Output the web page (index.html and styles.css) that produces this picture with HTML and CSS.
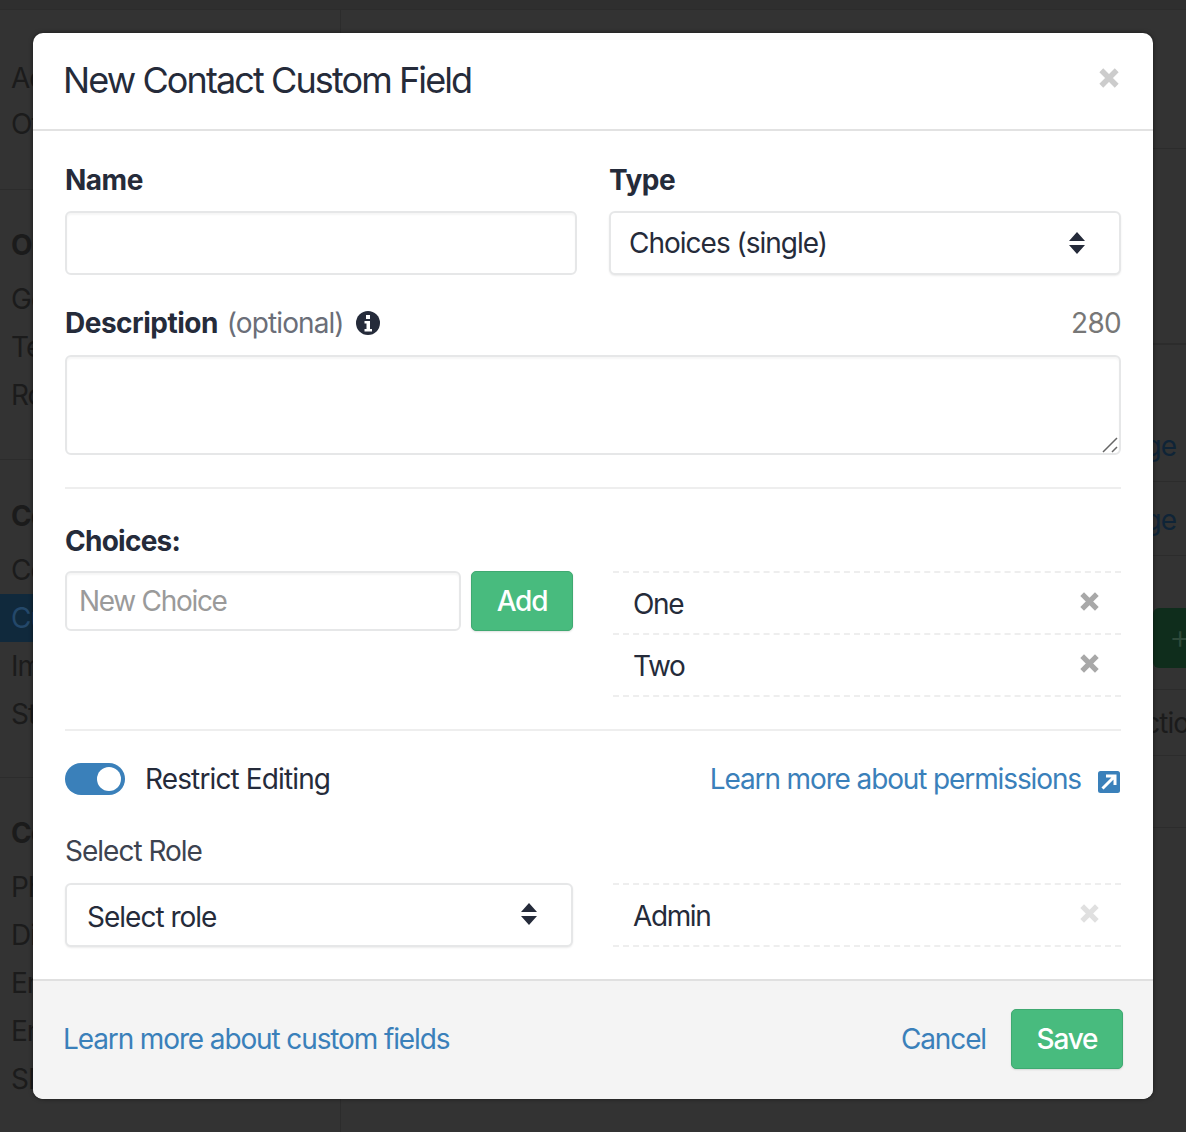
FILE: index.html
```html
<!DOCTYPE html>
<html lang="en">
<head>
    <meta charset="UTF-8">
    <title>New Contact Custom Field</title>
    <link rel="stylesheet" href="styles.css">
</head>
<body>
    <!-- Settings page behind the dialog -->
    <div class="page">
        <div class="topbar"></div>
        <div class="page-body">
            <aside class="sidebar">
                <section class="side-group side-group-first">
                    <a>Add-ons</a>
                    <a>Other</a>
                </section>
                <section class="side-group">
                    <h4>Organization</h4>
                    <a>General</a>
                    <a>Teams</a>
                    <a>Roles</a>
                </section>
                <section class="side-group side-group-contacts">
                    <h4>Contacts</h4>
                    <a>Contacts</a>
                    <a class="active">Custom Fields</a>
                    <a>Import</a>
                    <a>Statuses</a>
                </section>
                <section class="side-group">
                    <h4>Communication</h4>
                    <a>Phone</a>
                    <a>Dialer</a>
                    <a>Email</a>
                    <a>Email Templates</a>
                    <a>SMS</a>
                </section>
            </aside>
            <main class="content">
                <div class="content-row row-a"></div>
                <div class="content-row row-b"></div>
                <div class="content-row row-c"><a>Manage</a></div>
                <div class="content-row row-d"><a>Manage</a></div>
                <div class="content-row row-e"><span class="page-add">+</span></div>
                <div class="content-row row-f"><span>Actions</span></div>
                <div class="content-row row-g"></div>
            </main>
        </div>
    </div>

    <div class="modal">
        <header class="modal-header">
            <h2>New Contact Custom Field</h2>
            <svg class="icon-x close" viewBox="0 0 20 20"><path d="M3 3l14 14M17 3L3 17"/></svg>
        </header>

        <form class="modal-body">
            <div class="two-col">
                <div class="field">
                    <label class="strong">Name</label>
                    <input type="text" class="input input-tall">
                </div>
                <div class="field">
                    <label class="strong">Type</label>
                    <div class="select-wrap">
                        <select class="select">
                            <option>Choices (single)</option>
                        </select>
                        <svg class="updown" viewBox="0 0 16 24"><path d="M8 1l8 9H0zM0 14h16l-8 9z"/></svg>
                    </div>
                </div>
            </div>

            <div class="desc-head">
                <label class="strong">Description</label>
                <span class="optional">(optional)</span>
                <svg class="info" viewBox="0 0 24 24">
                    <circle cx="12" cy="12" r="12"/>
                    <path class="info-mark" d="M10 4h4v4h-4zM8.500 10h5.500v8h2v2.500H8.500V18h2v-5.500h-2z"/>
                </svg>
                <span class="count">280</span>
            </div>
            <div class="textarea-wrap">
                <textarea class="input textarea"></textarea>
                <svg class="grip" viewBox="0 0 16 16"><path d="M1 15L15 1M10 15l5-5"/></svg>
            </div>

            <hr>

            <label class="strong choices-label">Choices:</label>
            <div class="choices-row">
                <div class="add-choice">
                    <input type="text" class="input" placeholder="New Choice">
                    <button type="button" class="btn btn-add">Add</button>
                </div>
                <ul class="tag-list">
                    <li>One <svg class="icon-x remove" viewBox="0 0 20 20"><path d="M3 3l14 14M17 3L3 17"/></svg></li>
                    <li>Two <svg class="icon-x remove" viewBox="0 0 20 20"><path d="M3 3l14 14M17 3L3 17"/></svg></li>
                </ul>
            </div>

            <hr class="hr-second">

            <div class="restrict-row">
                <span class="toggle"><span class="knob"></span></span>
                <span class="restrict-text">Restrict Editing</span>
                <a class="link learn-perm">Learn more about permissions</a>
                <svg class="ext" viewBox="0 0 22 22">
                    <rect width="22" height="22" rx="2.500"/>
                    <path class="ext-arrow" d="M4.500 17.500L16.500 5.500M8 5h9v9"/>
                </svg>
            </div>

            <div class="choices-row role-row">
                <div class="role-col">
                    <label class="role-label">Select Role</label>
                    <div class="select-wrap">
                        <select class="select select-role">
                            <option>Select role</option>
                        </select>
                        <svg class="updown updown-role" viewBox="0 0 16 24"><path d="M8 1l8 9H0zM0 14h16l-8 9z"/></svg>
                    </div>
                </div>
                <ul class="tag-list role-list">
                    <li>Admin <svg class="icon-x remove muted" viewBox="0 0 20 20"><path d="M3 3l14 14M17 3L3 17"/></svg></li>
                </ul>
            </div>
        </form>

        <footer class="modal-footer">
            <a class="link">Learn more about custom fields</a>
            <a class="link cancel">Cancel</a>
            <button type="button" class="btn btn-save">Save</button>
        </footer>
    </div>
</body>
</html>
```

FILE: styles.css
```css
/* General Page Styling */
* {
    box-sizing: border-box;
}

html, body {
    height: 100%;
}

body {
    margin: 0;
    overflow: hidden;
    background: #333333;
    color: #252b3a;
    font-family: 'Inter', 'Liberation Sans', sans-serif;
    font-size: 28px;
    letter-spacing: -1px;
}

/* Dimmed page behind the dialog */
.page {
    height: 100%;
    color: #1b1b1b;
}

.topbar {
    height: 10px;
    border-bottom: 1px solid #2c2c2c;
    background: #2f2f2f;
}

.page-body {
    display: flex;
    height: 1122px;
}

.sidebar {
    width: 341px;
    flex: none;
    border-right: 1px solid #2c2c2c;
}

.side-group {
    padding: 31px 0 40px;
    border-bottom: 1px solid #2c2c2c;
}

.side-group:last-child {
    border-bottom: none;
}

.side-group h4 {
    margin: 0 0 6px;
    padding-left: 11px;
    font-size: 28px;
    line-height: 48px;
    font-weight: 700;
}

.side-group a {
    display: block;
    height: 48px;
    padding-left: 11px;
    line-height: 48px;
    white-space: nowrap;
}

.side-group-first {
    padding: 45px 0 42px;
}

.side-group-first a {
    height: 46px;
    line-height: 46px;
}

.side-group-contacts {
    padding: 32px 0 39px;
}

.side-group a.active {
    background: #10293c;
    color: #24486a;
}

.content {
    flex: 1;
    min-width: 0;
    overflow: hidden;
}

.content-row {
    display: flex;
    justify-content: flex-end;
    align-items: center;
    border-bottom: 1px solid #2c2c2c;
    white-space: nowrap;
}

.content-row a {
    padding-right: 10px;
    color: #0f2437;
}

.row-a { height: 139px; }
.row-b { height: 195px; }
.row-c { height: 138px; align-items: flex-end; padding-bottom: 18px; border-top: 1px solid #2c2c2c; }
.row-d { height: 74px; align-items: flex-end; padding-bottom: 18px; }
.row-e { height: 134px; padding-top: 30px; }
.row-f { height: 66px; justify-content: flex-start; padding-left: 785px; }
.row-g { height: 72px; }

.page-add {
    display: block;
    width: 60px;
    height: 60px;
    margin-right: -27px;
    padding-left: 16px;
    border-radius: 6px;
    background: #0f2d1c;
    color: #2f4a3a;
    font-weight: 300;
    font-size: 34px;
    line-height: 58px;
}

/* Dialog */
.modal {
    position: absolute;
    top: 33px;
    left: 33px;
    width: 1120px;
    height: 1066px;
    display: flex;
    flex-direction: column;
    border-radius: 10px;
    background: #ffffff;
    box-shadow: 0 0 4px rgba(0, 0, 0, 0.5);
    overflow: hidden;
}

.modal-header {
    height: 98px;
    flex: none;
    display: flex;
    justify-content: space-between;
    align-items: center;
    padding: 0 34px 0 30px;
    border-bottom: 2px solid #e2e2e2;
}

.modal-header h2 {
    margin: 0 0 2px;
    font-size: 36px;
    font-weight: 400;
    letter-spacing: -1.9px;
}

.icon-x path {
    fill: none;
    stroke: currentColor;
    stroke-width: 5;
}

.close {
    width: 22px;
    height: 22px;
    margin: 0 -1px 6px 0;
    color: #cccccc;
}

.modal-body {
    flex: 1;
    padding: 32px 32px 0;
}

.two-col {
    display: flex;
    gap: 32px;
}

.field {
    flex: 1;
}

.strong {
    display: block;
    font-weight: 700;
    line-height: 34px;
    letter-spacing: -0.5px;
}

.field .strong {
    margin-bottom: 14px;
}

/* Inputs */
.input {
    display: block;
    width: 100%;
    height: 60px;
    padding: 0 12px;
    border: 2px solid #e6e7e8;
    border-radius: 6px;
    outline: none;
    background: #ffffff;
    box-shadow: inset 0 2px 2px rgba(0, 0, 0, 0.04);
    color: inherit;
    font: inherit;
    letter-spacing: inherit;
}

.input::placeholder {
    color: #9a9a9a;
    letter-spacing: -1.3px;
}

.input-tall {
    height: 64px;
}

.select-wrap {
    position: relative;
}

.select {
    display: block;
    width: 100%;
    height: 64px;
    padding: 0 18px;
    border: 2px solid #e6e7e8;
    border-radius: 6px;
    outline: none;
    background: #ffffff;
    box-shadow: 0 1px 2px rgba(0, 0, 0, 0.08);
    appearance: none;
    color: inherit;
    font: inherit;
    letter-spacing: inherit;
}

.updown {
    position: absolute;
    top: 20px;
    right: 36px;
    width: 16px;
    height: 24px;
    fill: #252b3a;
    pointer-events: none;
}

.desc-head {
    display: flex;
    align-items: center;
    margin-top: 30px;
    height: 36px;
}

.optional {
    margin-left: 9px;
    color: #6b6e78;
    letter-spacing: -0.9px;
}

.info {
    width: 24px;
    height: 24px;
    margin-left: 12px;
    fill: #252b3a;
}

.info-mark {
    fill: #ffffff;
}

.count {
    margin-left: auto;
    color: #777777;
    letter-spacing: -0.7px;
}

.textarea-wrap {
    position: relative;
    margin-top: 14px;
}

.textarea {
    height: 100px;
    padding: 10px 13px;
    resize: none;
}

.grip {
    position: absolute;
    right: 3px;
    bottom: 2px;
    width: 16px;
    height: 16px;
    pointer-events: none;
}

.grip path {
    fill: none;
    stroke: #666666;
    stroke-width: 1.500;
}

hr {
    height: 2px;
    margin: 32px 0 0;
    border: none;
    background: #eeeeee;
}

.choices-label {
    margin-top: 35px;
    letter-spacing: -0.75px;
}

/* Choices */
.choices-row {
    display: flex;
    justify-content: space-between;
    margin-top: 13px;
}

.add-choice {
    display: flex;
    gap: 10px;
    width: 508px;
}

.btn {
    flex: none;
    height: 60px;
    border: 1px solid #3fa971;
    border-radius: 5px;
    background: #48bb7e;
    box-shadow: 0 1px 2px rgba(0, 0, 0, 0.12);
    color: #ffffff;
    font: inherit;
    font-weight: 500;
    letter-spacing: -1.2px;
}

.btn-add {
    width: 102px;
}

.tag-list {
    width: 508px;
    height: 126px;
    margin: 0;
    padding: 0;
    list-style: none;
    border-top: 2px dashed #eeeeee;
    letter-spacing: -1.4px;
}

.tag-list li {
    display: flex;
    justify-content: space-between;
    align-items: center;
    height: 62px;
    padding: 2px 22px 0 20px;
    border-bottom: 2px dashed #eeeeee;
}

.remove {
    width: 21px;
    height: 21px;
    margin: 0 -1px 6px 0;
    color: #a8a8a8;
}

.remove.muted {
    color: #e0e0e0;
}

.hr-second {
    margin-top: 32px;
}

/* Restrict editing */
.restrict-row {
    display: flex;
    align-items: center;
    height: 32px;
    margin-top: 32px;
}

.toggle {
    display: flex;
    justify-content: flex-end;
    align-items: center;
    width: 60px;
    height: 32px;
    padding-right: 4px;
    border-radius: 16px;
    background: #3a80ba;
}

.knob {
    width: 24px;
    height: 24px;
    border-radius: 50%;
    background: #ffffff;
}

.restrict-text {
    margin-left: 20px;
    letter-spacing: -0.87px;
}

.link {
    color: #3a80ba;
    letter-spacing: -1.12px;
}

.learn-perm {
    margin-left: auto;
}

.ext {
    width: 22px;
    height: 22px;
    margin: 6px 1px 0 17px;
    fill: #3a80ba;
}

.ext-arrow {
    fill: none;
    stroke: #ffffff;
    stroke-width: 3;
}

.role-row {
    margin-top: 39px;
}

.role-col {
    width: 508px;
}

.role-label {
    display: block;
    margin-bottom: 15px;
    line-height: 34px;
    color: #3d4350;
}

.select-role {
    padding: 3px 20px 0;
}

.updown-role {
    top: 19px;
}

.role-list {
    height: 64px;
    margin-top: 49px;
}

/* Footer */
.modal-footer {
    height: 120px;
    flex: none;
    display: flex;
    align-items: center;
    padding: 0 30px 2px;
    border-top: 2px solid #e0e0e0;
    background: #f4f4f4;
}

.cancel {
    margin-left: auto;
}

.btn-save {
    width: 112px;
    margin-left: 25px;
}
```
